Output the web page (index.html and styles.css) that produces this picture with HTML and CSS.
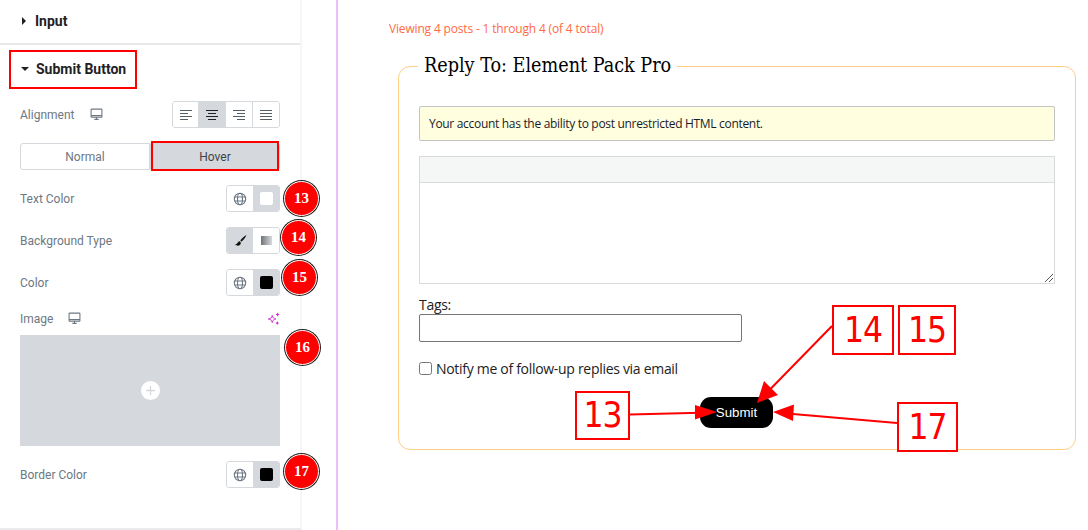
FILE: index.html
```html
<!DOCTYPE html>
<html lang="en">
<head>
<meta charset="utf-8">
<title>Submit Button settings</title>
<link rel="stylesheet" href="styles.css">
</head>
<body>
<svg class="defs" width="0" height="0" aria-hidden="true">
  <symbol id="monitor" viewBox="0 0 12 12"><path d="M1.5 1h9a.5.5 0 0 1 .5.5v6.500a.5.5 0 0 1-.5.5h-9A.5.5 0 0 1 1 8V1.500A.5.5 0 0 1 1.500 1zM1.500 7h9M4 10.500h4M6 8.500v2" fill="none" stroke="currentColor" stroke-width="1"/></symbol>
  <symbol id="globe" viewBox="0 0 14 14"><g fill="none" stroke="currentColor" stroke-width="1.100"><circle cx="7" cy="7" r="5.700"/><ellipse cx="7" cy="7" rx="2.500" ry="5.700"/><path d="M1.700 5h10.600M1.700 9h10.600"/></g></symbol>
</svg>

<aside class="panel">
  <section class="section section-input">
    <span class="caret-right"></span><h3 class="section-title">Input</h3>
  </section>
  <section class="section section-submit">
    <span class="caret-down"></span><h3 class="section-title">Submit Button</h3>
  </section>
  <div class="controls">
    <div class="row row-align">
      <span class="label">Alignment</span>
      <svg class="device"><use href="#monitor"/></svg>
      <div class="seg seg-four">
        <span class="seg-btn"><svg class="align" viewBox="0 0 12 10"><path d="M0 .5h12M0 3.500h8M0 6.500h12M0 9.500h8"/></svg></span>
        <span class="seg-btn active"><svg class="align" viewBox="0 0 12 10"><path d="M0 .5h12M2 3.500h8M0 6.500h12M2 9.500h8"/></svg></span>
        <span class="seg-btn"><svg class="align" viewBox="0 0 12 10"><path d="M0 .5h12M4 3.500h8M0 6.500h12M4 9.500h8"/></svg></span>
        <span class="seg-btn"><svg class="align" viewBox="0 0 12 10"><path d="M0 .5h12M0 3.500h12M0 6.500h12M0 9.500h12"/></svg></span>
      </div>
    </div>
    <div class="tabs">
      <span class="tab">Normal</span>
      <span class="tab tab-active">Hover</span>
    </div>
    <div class="row row-text">
      <span class="label">Text Color</span>
      <div class="seg">
        <span class="seg-btn"><svg class="globe"><use href="#globe"/></svg></span>
        <span class="seg-btn active"><span class="swatch swatch-white"></span></span>
      </div>
    </div>
    <div class="row row-bg">
      <span class="label">Background Type</span>
      <div class="seg">
        <span class="seg-btn active"><svg class="brush" viewBox="0 0 12 12"><path d="M11.500 1C9.500 2 7 4.200 5.800 6l1.100 1.100C8.700 5.800 10.700 3.200 11.500 1zM5 6.600C3.300 6.800 3.500 9.300.8 10c1.500 1.200 5.700 1.600 5.500-2.100z"/></svg></span>
        <span class="seg-btn"><span class="gradient"></span></span>
      </div>
    </div>
    <div class="row row-color">
      <span class="label">Color</span>
      <div class="seg">
        <span class="seg-btn"><svg class="globe"><use href="#globe"/></svg></span>
        <span class="seg-btn active"><span class="swatch swatch-black"></span></span>
      </div>
    </div>
    <div class="row row-image">
      <span class="label">Image</span>
      <svg class="device device-image"><use href="#monitor"/></svg>
      <svg class="sparkle" viewBox="0 0 12 12"><path d="M4.800 3.200C5.300 5.400 5.900 6 8.200 6.500 5.900 7 5.300 7.600 4.800 9.800 4.300 7.600 3.700 7 1.200 6.500 3.700 6 4.300 5.400 4.800 3.200z" fill="none" stroke="#d01fd0" stroke-width=".8"/><path d="M9.800.5l.6 1.200 1.200.6-1.200.6-.6 1.200-.6-1.200-1.200-.6 1.200-.6zM9.500 8.500l.6 1.100 1.100.6-1.100.6-.6 1.100-.6-1.100-1.100-.6 1.100-.6z" fill="#d01fd0"/></svg>
    </div>
    <div class="image-drop">
      <span class="plus-circle"><svg class="plus" viewBox="0 0 10 10"><path d="M5 0v10M0 5h10"/></svg></span>
    </div>
    <div class="row row-border">
      <span class="label">Border Color</span>
      <div class="seg">
        <span class="seg-btn"><svg class="globe"><use href="#globe"/></svg></span>
        <span class="seg-btn active"><span class="swatch swatch-black"></span></span>
      </div>
    </div>
  </div>
</aside>

<main class="content">
  <p class="viewing">Viewing 4 posts - 1 through 4 (of 4 total)</p>
  <form class="reply-form">
    <fieldset class="reply">
      <legend class="reply-title">Reply To: Element Pack Pro</legend>
      <div class="notice">Your account has the ability to post unrestricted HTML content.</div>
      <div class="editor">
        <div class="editor-bar"></div>
        <div class="editor-body">
          <svg class="grip" viewBox="0 0 8 8"><path d="M0 8L8 0M4 8L8 4"/></svg>
        </div>
      </div>
      <label class="tags-label" for="tags">Tags:</label>
      <input class="tags-input" id="tags" type="text">
      <label class="notify"><input class="notify-box" type="checkbox">Notify me of follow-up replies via email</label>
      <div class="submit-row"><button class="submit" type="button">Submit</button></div>
    </fieldset>
  </form>
</main>

<div class="red-box box-input"></div>
<div class="red-box box-hover"></div>
<span class="badge badge-13">13</span>
<span class="badge badge-14">14</span>
<span class="badge badge-15">15</span>
<span class="badge badge-16">16</span>
<span class="badge badge-17">17</span>

<svg class="arrows" viewBox="0 0 1088 530" aria-hidden="true">
  <path d="M630 414.500L700 412.800M832 326L768 391.500M897 423L790 413.800" fill="none" stroke="#f00" stroke-width="2"/>
  <path d="M717 412L695 405V419.500zM757 403L764 381 778 395zM773 412L794 404.500 793 421z" fill="#f00"/>
</svg>
<span class="num num-13">13</span>
<span class="num num-14">14</span>
<span class="num num-15">15</span>
<span class="num num-17">17</span>
</body>
</html>
```

FILE: styles.css
```css
* { box-sizing: border-box; }
html, body { margin: 0; padding: 0; }
body {
  position: relative;
  width: 1088px;
  height: 530px;
  overflow: hidden;
  display: flex;
  background: #fff;
  font-family: "Roboto", sans-serif;
}
.defs { position: absolute; }

/* Panel */
.panel {
  width: 302px;
  height: 530px;
  flex: none;
  border-right: 2px solid #f6f6f6;
  border-bottom: 2px solid #eaebec;
}
.section {
  display: flex;
  align-items: center;
  border-bottom: 2px solid #e8e9ea;
}
.section-input { height: 45px; padding: 0 0 2px 22px; }
.section-submit { height: 46px; padding: 1px 0 0 21px; border-bottom: 0; }
.section-title {
  margin: 0;
  font-size: 14px;
  font-weight: 700;
  color: #1f2124;
  line-height: 16px;
}
.section-input .section-title { margin-left: 9px; }
.section-submit .section-title { margin-left: 7px; }
.caret-right {
  width: 0; height: 0;
  border-left: 4px solid #1f2124;
  border-top: 4px solid transparent;
  border-bottom: 4px solid transparent;
}
.caret-down {
  width: 0; height: 0;
  border-top: 4px solid #1f2124;
  border-left: 4px solid transparent;
  border-right: 4px solid transparent;
}
.controls { padding: 10px 20px 0; }
.row {
  display: flex;
  align-items: center;
  justify-content: space-between;
  height: 27px;
}
.label { font-size: 12px; color: #6d7882; }
.row-align .label { margin-right: 16px; }
.row-align { justify-content: flex-start; }
.device { width: 13px; height: 13px; color: #6d7882; }
.row-align .seg { margin-left: auto; }

.seg {
  display: flex;
  height: 27px;
  border-radius: 3px;
  overflow: hidden;
  border: 1px solid #d5d8dc;
}
.seg-btn {
  width: 26px;
  display: flex;
  align-items: center;
  justify-content: center;
  background: #fff;
  color: #6d7882;
}
.seg-four .seg-btn { width: 27px; border-right: 1px solid #d5d8dc; }
.seg-four .seg-btn:first-child, .seg-four .seg-btn:last-child { width: 26px; }
.seg-four .seg-btn:last-child { border-right: 0; }
.seg-btn.active, .seg-four .seg-btn.active { background: #d5d8dc; border-right-color: #d5d8dc; color: #1f2124; }
.align { width: 12px; height: 10px; stroke: #555d65; stroke-width: 1; fill: none; }
.active .align { stroke: #1f2124; }
.globe { width: 14px; height: 14px; color: #6d7882; }
.swatch { width: 13px; height: 13px; border-radius: 2px; }
.swatch-white { background: #fff; }
.swatch-black { background: #000; }
.brush { width: 13px; height: 13px; fill: #111; }
.gradient { width: 11px; height: 9px; background: linear-gradient(90deg, #6f7378, #d8dadd); }

.tabs { display: flex; margin-top: 15px; height: 27px; }
.tab {
  flex: 1;
  display: flex;
  align-items: center;
  justify-content: center;
  font-size: 12px;
  color: #6d7882;
  border: 1px solid #d5d8dc;
  border-radius: 3px 0 0 3px;
}
.tab-active {
  color: #3f444b;
  background: #d5d8dc;
  border-radius: 0 3px 3px 0;
}
.row-text { margin-top: 15px; }
.row-bg { margin-top: 15px; }
.row-color { margin-top: 15px; }
.row-image { margin-top: 9px; justify-content: flex-start; }
.device-image { margin-left: 15px; }
.sparkle { width: 13px; height: 13px; margin-left: auto; }
.image-drop {
  height: 111px;
  margin-top: 3px;
  background: #d5d8dc;
  display: flex;
  align-items: center;
  justify-content: center;
}
.plus-circle {
  width: 19px; height: 19px;
  border-radius: 50%;
  background: #fff;
  display: flex;
  align-items: center;
  justify-content: center;
}
.plus { width: 9px; height: 9px; stroke: #d5d8dc; stroke-width: 1.500; fill: none; }
.row-border { margin-top: 15px; }

/* Content */
.content {
  flex: none;
  width: 752px;
  margin-left: 34px;
  height: 530px;
  border-left: 2px solid #efbdf7;
  padding: 21px 0 0 51px;
  font-family: "Open Sans", sans-serif;
}
.viewing { margin: 0; font-size: 12px; line-height: 16px; color: #ff6a45; letter-spacing: -.17px; }
.reply-form { margin: 17px 0 0 9px; width: 678px; }
.reply {
  margin: 0;
  padding: 28px 20px 0;
  height: 396px;
  min-width: 0;
  border: 1px solid #fdd085;
  border-radius: 12px;
}
.reply-title {
  margin-left: -1px;
  padding: 0 6px;
  font-family: "DejaVu Serif", serif;
  font-stretch: condensed;
  font-size: 19.600px;
  line-height: 24px;
  color: #000;
}
.notice {
  height: 35px;
  padding: 0 9px;
  display: flex;
  align-items: center;
  font-size: 12px;
  color: #1a1a2a;
  background: #ffffe0;
  border: 1px solid #c3c4c7;
  border-radius: 2px;
  letter-spacing: -.31px;
}
.editor { margin-top: 15px; height: 128px; border: 1px solid #d8dadb; display: flex; flex-direction: column; }
.editor-bar { height: 26px; background: #f5f6f6; border-bottom: 1px solid #d8dadb; }
.editor-body { flex: 1; display: flex; align-items: flex-end; justify-content: flex-end; padding: 0 1px 1px 0; }
.grip { width: 8px; height: 8px; stroke: #555; stroke-width: 1; fill: none; }
.tags-label {
  display: block;
  margin-top: 11px;
  font-size: 14px;
  line-height: 19px;
  color: #222;
  letter-spacing: -.3px;
}
.tags-input {
  display: block;
  width: 323px;
  height: 28px;
  border: 1px solid #767676;
  border-radius: 2px;
  background: #fff;
  margin: 0;
}
.notify {
  display: flex;
  align-items: center;
  margin-top: 16px;
  height: 20px;
  font-size: 14px;
  color: #222;
  letter-spacing: -.3px;
}
.notify-box { margin: 0 4px 0 0; width: 13px; height: 13px; }
.submit-row { display: flex; margin: 19px 0 0 281px; }
.submit {
  width: 73px;
  height: 31px;
  padding: 0;
  border: 0;
  border-radius: 11px;
  background: #000;
  color: #fff;
  font-family: "Liberation Sans", sans-serif;
  font-size: 13.300px;
}

/* Annotations layered over the page */
.red-box { position: absolute; border: 2px solid #f00; }
.box-input { left: 9px; top: 50px; width: 128px; height: 39px; }
.box-hover { left: 151px; top: 141px; width: 128px; height: 30px; }
.badge {
  position: absolute;
  width: 35px;
  height: 35px;
  display: flex;
  align-items: center;
  justify-content: center;
  border-radius: 50%;
  background: #f00;
  border: 1px solid #fff;
  box-shadow: 0 0 0 1px #222;
  color: #fff;
  font: 700 15px "Liberation Serif", serif;
}
.badge-13 { left: 284px; top: 181px; }
.badge-14 { left: 281px; top: 220px; }
.badge-15 { left: 282px; top: 260px; }
.badge-16 { left: 285px; top: 330px; }
.badge-17 { left: 284px; top: 454px; }
.arrows { position: absolute; left: 0; top: 0; width: 1088px; height: 530px; }
.num {
  position: absolute;
  display: flex;
  align-items: center;
  justify-content: center;
  border: 2px solid #f00;
  background: #fff;
  color: #f00;
  font-family: "DejaVu Sans Condensed", "DejaVu Sans", sans-serif;
  font-stretch: condensed;
  font-size: 35px;
  letter-spacing: -1px;
  line-height: 1;
}
.num-13 { left: 575px; top: 391px; width: 55px; height: 49px; }
.num-14 { left: 832px; top: 305px; width: 62px; height: 50px; }
.num-15 { left: 898px; top: 305px; width: 58px; height: 50px; }
.num-17 { left: 897px; top: 402px; width: 61px; height: 50px; }
```
